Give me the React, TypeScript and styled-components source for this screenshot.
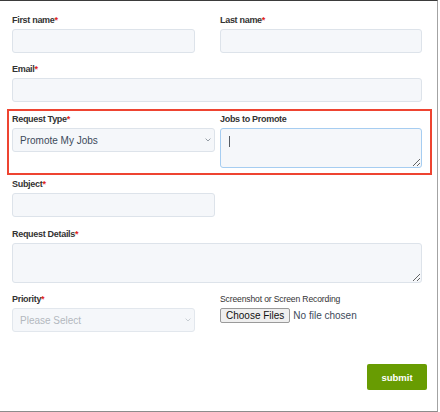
import React from "react";
import styled, { createGlobalStyle } from "styled-components";

const GlobalStyle = createGlobalStyle`
  body {
    margin: 0;
    background: #ffffff;
    font-family: "Liberation Sans", Arial, sans-serif;
  }
`;

const Frame = styled.div`
  width: 437px;
  height: 410px;
  border-top: 1px solid #3b3b3b;
  border-right: 1px solid #a3a3a3;
  border-bottom: 1px solid #8c8c8c;
  background: #ffffff;
`;

const Form = styled.form`
  display: flex;
  flex-direction: column;
  padding: 13px 0 0 12px;
`;

const Row = styled.div<{ $top?: number }>`
  display: grid;
  grid-template-columns: 203px 202px;
  column-gap: 5px;
  margin-top: ${({ $top }) => $top ?? 0}px;
`;

const Highlight = styled(Row)`
  margin-left: -5px;
  width: 410px;
  padding: 2px 8px 5px 3px;
  border: 2px solid #ee4431;
`;

const Field = styled.div<{ $span?: boolean }>`
  display: flex;
  flex-direction: column;
  gap: 3px;
  grid-column: ${({ $span }) => ($span ? "1 / span 2" : "auto")};
`;

const Label = styled.label<{ $plain?: boolean }>`
  font-size: ${({ $plain }) => ($plain ? "8.6px" : "9px")};
  font-weight: ${({ $plain }) => ($plain ? 400 : 700)};
  letter-spacing: ${({ $plain }) => ($plain ? "-0.15px" : "-0.3px")};
  line-height: 12px;
  color: #333333;
  white-space: nowrap;
`;

const Star = styled.span`
  color: #e2231a;
`;

const TextInput = styled.input<{ $narrow?: boolean }>`
  box-sizing: border-box;
  width: ${({ $narrow }) => ($narrow ? "183px" : "100%")};
  height: 24px;
  margin: 0;
  padding: 0 8px;
  background: #f5f7fa;
  border: 1px solid #dde3ea;
  border-radius: 3px;
  font: 10px "Liberation Sans", Arial, sans-serif;
  outline: none;
`;

const TextArea = styled.textarea<{ $focused?: boolean }>`
  box-sizing: border-box;
  width: 100%;
  height: 40px;
  margin: 0;
  padding: 6px 8px;
  background: #f5f7fa;
  border: 1px solid ${({ $focused }) => ($focused ? "#a6cdf1" : "#dde3ea")};
  border-radius: 3px;
  font: 10px "Liberation Sans", Arial, sans-serif;
  outline: none;
  caret-color: transparent;
  display: block;
`;

const AreaWrap = styled.div`
  position: relative;
`;

const Caret = styled.span`
  position: absolute;
  left: 9px;
  top: 8px;
  width: 1px;
  height: 11px;
  background: #555b63;
`;

const SelectWrap = styled.div<{ $narrow?: boolean }>`
  position: relative;
  width: ${({ $narrow }) => ($narrow ? "183px" : "100%")};
`;

const Select = styled.select`
  box-sizing: border-box;
  width: 100%;
  height: 24px;
  margin: 0;
  padding: 0 7px;
  appearance: none;
  background: #f5f7fa;
  border: 1px solid #dde3ea;
  border-radius: 3px;
  font: 10px "Liberation Sans", Arial, sans-serif;
  color: #3c4a5b;
  outline: none;

  &:disabled {
    color: #b3b8be;
    opacity: 1;
    border-color: #e2e7ed;
  }
`;

const Chevron = styled.svg`
  position: absolute;
  right: 4px;
  top: 10px;
  pointer-events: none;
`;

const FileInput = styled.input`
  font: 10px "Liberation Sans", Arial, sans-serif;
  color: #3c4a5b;
  margin: 0;
  height: 15px;

  &::file-selector-button {
    font: 10px "Liberation Sans", Arial, sans-serif;
    color: #111111;
    height: 15px;
    padding: 0 5px;
    margin-right: 3px;
    background: #efefef;
    border: 1px solid #9a9a9a;
    border-radius: 2px;
  }
`;

const Footer = styled.div`
  display: flex;
  justify-content: flex-end;
  width: 415px;
  margin-top: 32px;
`;

const Submit = styled.button`
  width: 60px;
  height: 26px;
  border: none;
  border-radius: 2px;
  background: #689c02;
  color: #ffffff;
  font: 700 9.5px "Liberation Sans", Arial, sans-serif;
  cursor: pointer;
`;

function Down({ color = "#8a929b" }: { color?: string }) {
  return (
    <Chevron width="6" height="4" viewBox="0 0 6 4" fill="none">
      <path d="M0.6 0.6 L3 3 L5.4 0.6" stroke={color} strokeWidth="0.9" />
    </Chevron>
  );
}

function Req({ children }: { children: React.ReactNode }) {
  return (
    <Label>
      {children}
      <Star>*</Star>
    </Label>
  );
}

export default function App() {
  return (
    <Frame>
      <GlobalStyle />
      <Form onSubmit={(e) => e.preventDefault()}>
        <Row>
          <Field>
            <Req>First name</Req>
            <TextInput $narrow />
          </Field>
          <Field>
            <Req>Last name</Req>
            <TextInput />
          </Field>
        </Row>

        <Row $top={10}>
          <Field $span>
            <Req>Email</Req>
            <TextInput />
          </Field>
        </Row>

        <Highlight $top={7}>
          <Field>
            <Req>Request Type</Req>
            <SelectWrap>
              <Select defaultValue="promote">
                <option value="promote">Promote My Jobs</option>
              </Select>
              <Down />
            </SelectWrap>
          </Field>
          <Field>
            <Label>Jobs to Promote</Label>
            <AreaWrap>
              <TextArea $focused />
              <Caret />
            </AreaWrap>
          </Field>
        </Highlight>

        <Row $top={3}>
          <Field>
            <Req>Subject</Req>
            <TextInput />
          </Field>
        </Row>

        <Row $top={11}>
          <Field $span>
            <Req>Request Details</Req>
            <TextArea />
          </Field>
        </Row>

        <Row $top={10}>
          <Field>
            <Req>Priority</Req>
            <SelectWrap $narrow>
              <Select disabled defaultValue="">
                <option value="">Please Select</option>
              </Select>
              <Down color="#c3c8ce" />
            </SelectWrap>
          </Field>
          <Field>
            <Label $plain>Screenshot or Screen Recording</Label>
            <FileInput type="file" multiple />
          </Field>
        </Row>

        <Footer>
          <Submit type="submit">submit</Submit>
        </Footer>
      </Form>
    </Frame>
  );
}
